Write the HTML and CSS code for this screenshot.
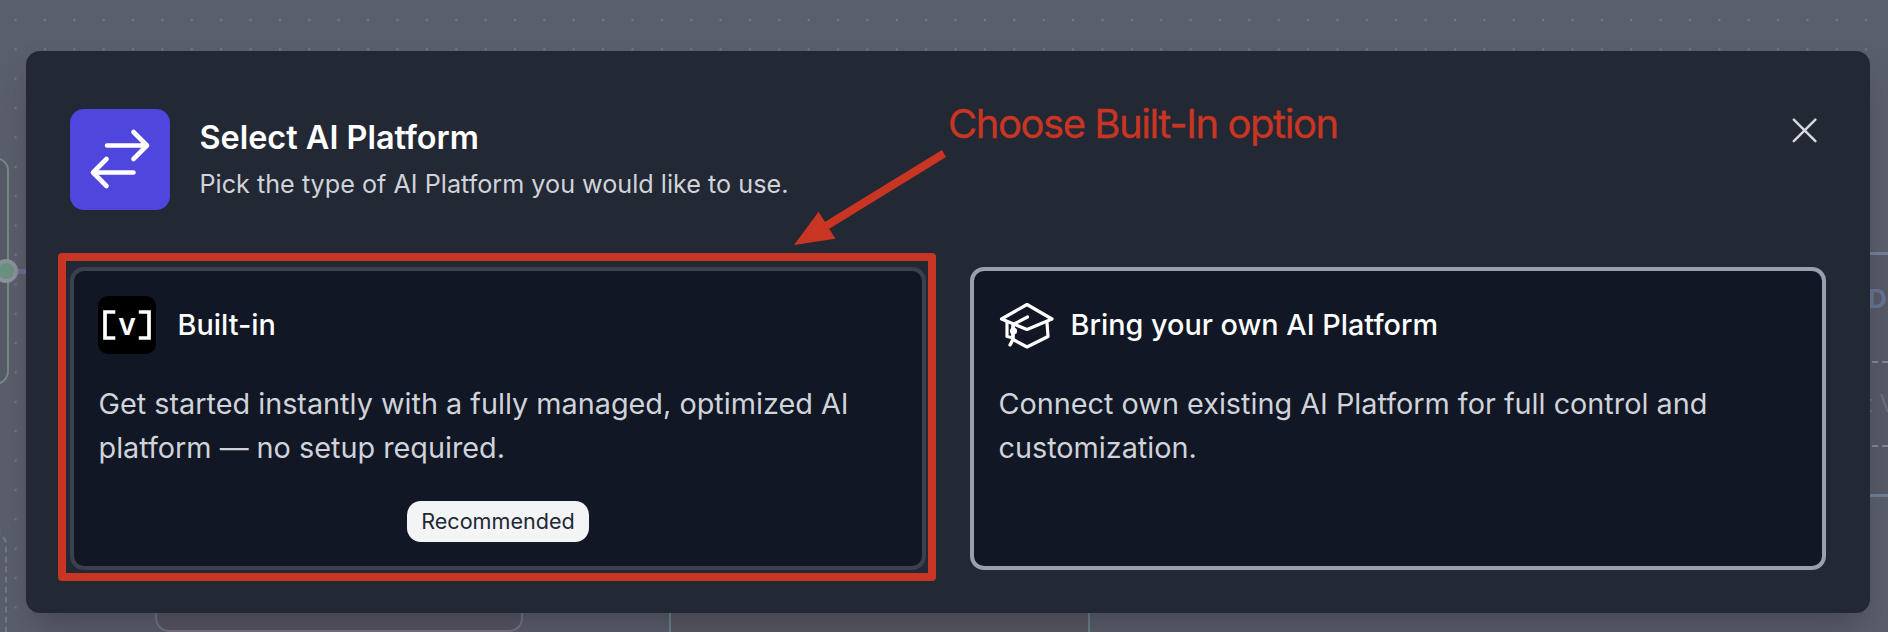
FILE: index.html
```html
<!DOCTYPE html>
<html lang="en">
<head>
<meta charset="utf-8">
<title>Select AI Platform</title>
<link rel="stylesheet" href="styles.css">
</head>
<body>
<div class="page">
  <div class="canvas" aria-hidden="true">
    <div class="node node-start"></div>
    <div class="edge"></div>
    <div class="handle"></div>
    <div class="node node-dashed"></div>
    <div class="node node-purple"></div>
    <div class="node node-teal"></div>
    <div class="node node-blue">
      <div class="node-title">D</div>
      <div class="node-slot">t V</div>
    </div>
  </div>

  <main class="modal">
    <header class="modal-header">
      <div class="modal-icon">
        <svg viewBox="0 0 100 100" fill="none" stroke="#fff" stroke-width="4.6" stroke-linecap="round" stroke-linejoin="round">
          <path d="M37 36.5H77M63.5 23L77 36.5L63.5 50M63.5 63.500H23M36.500 50L23 63.500L36.500 77"/>
        </svg>
      </div>
      <div class="modal-heading">
        <h1 class="modal-title">Select AI Platform</h1>
        <p class="modal-subtitle">Pick the type of AI Platform you would like to use.</p>
      </div>
      <button class="close" aria-label="Close">
        <svg viewBox="0 0 26 26" fill="none" stroke="#d5d8de" stroke-width="2.5" stroke-linecap="round">
          <path d="M1.800 2.600L23.400 24.200M23.400 2.600L1.800 24.200"/>
        </svg>
      </button>
    </header>

    <div class="options">
      <section class="option option-builtin">
        <div class="option-head">
          <div class="option-logo">
            <svg viewBox="0 0 58 58">
              <path fill="none" stroke="#fff" stroke-width="3.700" d="M17.300 16H7V42H17.300M40.800 16H51V42H40.800"/>
              <text class="logo-letter" x="29" y="38.500" text-anchor="middle">v</text>
            </svg>
          </div>
          <h2 class="option-title">Built-in</h2>
        </div>
        <p class="option-text">Get started instantly with a fully managed, optimized AI platform — no setup required.</p>
        <span class="badge">Recommended</span>
      </section>
      <section class="option option-own">
        <div class="option-head">
          <div class="option-cap">
            <svg viewBox="0 0 56 48" fill="none" stroke="#fff" stroke-width="3.200" stroke-linecap="round" stroke-linejoin="round">
              <path d="M2.500 17L28 2.500L53 17L28 27.500Z"/>
              <path d="M8 20V34.500L12.500 35.500M48 20.500L49 34.500L28 45L14 37.500V23"/>
              <path d="M28.500 15L16 21.500Q13.500 23 14 27V34Q14 39 11 43"/>
              <circle cx="14.500" cy="29" r="2" fill="#fff"/>
            </svg>
          </div>
          <h2 class="option-title">Bring your own AI Platform</h2>
        </div>
        <p class="option-text">Connect own existing AI Platform for full control and customization.</p>
      </section>
    </div>
  </main>

  <div class="callout-frame"></div>
  <div class="callout-text">Choose Built-In option</div>
  <svg class="callout-arrow" viewBox="0 0 160 100">
    <path d="M154 8.500L36 81" stroke="#c93523" stroke-width="8" fill="none"/>
    <path d="M4 100L28.600 66.700L45.400 93.700Z" fill="#c93523"/>
  </svg>
</div>
</body>
</html>
```
FILE: styles.css
```css
* {
  box-sizing: border-box;
}

body {
  margin: 0;
  font-family: Inter, "Liberation Sans", sans-serif;
}

.page {
  position: relative;
  width: 1888px;
  height: 632px;
  overflow: hidden;
  padding: 51px 18px 0 26px;
  background-color: #5a5f6c;
}

/* Dimmed flow editor behind the dialog */
.canvas {
  position: absolute;
  inset: 0;
  background-image: radial-gradient(circle at center, #747983 0.9px, transparent 1.6px);
  background-size: 29.38px 29.38px;
  background-position: 0.9px 5.3px;
}

.node {
  position: absolute;
  border: 2px solid;
  border-radius: 14px;
  background: #565b67;
}

.node-start {
  left: -200px;
  top: 157px;
  width: 209px;
  height: 228px;
  border-color: #748a86;
}

.edge {
  position: absolute;
  left: 16px;
  top: 269px;
  width: 20px;
  height: 5px;
  background: #6c6d99;
}

.handle {
  position: absolute;
  left: -6px;
  top: 259px;
  width: 24px;
  height: 24px;
  border: 4px solid #8f939c;
  border-radius: 50%;
  background: #6b9480;
}

.node-dashed {
  left: -200px;
  top: 531px;
  width: 207px;
  height: 200px;
  border: 2px dashed #727b80;
  background: none;
}

.node-purple {
  left: 155px;
  top: 480px;
  width: 368px;
  height: 152px;
  border-color: #7b768e;
  background: #565762;
}

.node-teal {
  left: 669px;
  top: 480px;
  width: 421px;
  height: 300px;
  border-color: #6c8a8a;
  background: #595a64;
}

.node-blue {
  left: 1700px;
  top: 252px;
  width: 400px;
  height: 245px;
  padding: 32px 0 0 165px;
  border-width: 3px;
  border-color: #72809c;
  background: #575b67;
}

.node-title {
  height: 74px;
  font-size: 26px;
  line-height: 24px;
  font-weight: 700;
  color: #667697;
}

.node-slot {
  height: 86px;
  margin-left: -165px;
  padding-left: 162px;
  border: dashed #858993;
  border-width: 2px 0;
  font-size: 24px;
  line-height: 82px;
  color: #6d717c;
}

/* Dialog */
.modal {
  position: relative;
  width: 1844px;
  height: 562px;
  padding: 58px 44px 43px;
  border-radius: 14px;
  background: #222834;
  box-shadow: 0 20px 36px -8px rgba(40, 36, 44, 0.4);
}

.modal-header {
  display: flex;
  align-items: flex-start;
  height: 158px;
}

.modal-icon {
  width: 100px;
  height: 101px;
  border-radius: 14px;
  background: #4f46dd;
}

.modal-icon svg {
  display: block;
  width: 100px;
  height: 100px;
}

.modal-heading {
  flex: 1;
  padding: 7px 0 0 29.500px;
}

.modal-title {
  margin: 0;
  font-size: 32.400px;
  line-height: 44px;
  font-weight: 600;
  color: #fff;
}

.modal-subtitle {
  margin: 6px 0 0;
  font-size: 25.200px;
  line-height: 36px;
  color: #d0d3da;
}

.close {
  width: 26px;
  height: 26px;
  margin: 8px 8px 0 0;
  padding: 0;
  border: 0;
  background: none;
}

.close svg {
  display: block;
}

.options {
  display: grid;
  grid-template-columns: 1fr 1fr;
  gap: 44px;
}

.option {
  display: flex;
  flex-direction: column;
  height: 303px;
  padding: 25px 24px;
  border: 4px solid #3a404f;
  border-radius: 14px;
  background: #111724;
}

.option-own {
  border-color: #9a9faf;
}

.option-head {
  display: flex;
  align-items: center;
  height: 58px;
}

.option-logo {
  width: 58px;
  height: 58px;
  margin-right: 21.500px;
  border-radius: 10px;
  background: #000;
}

.option-logo svg,
.option-cap svg {
  display: block;
}

.logo-letter {
  font-size: 30px;
  font-weight: 600;
  fill: #fff;
}

.option-cap {
  width: 56px;
  height: 48px;
  margin: 2px 15.500px 0 1px;
}

.option-title {
  margin: 0;
  font-size: 28.800px;
  line-height: 44px;
  font-weight: 500;
  color: #fff;
}

.option-text {
  margin: 28px 0 0 0.500px;
  font-size: 28.800px;
  line-height: 44px;
  color: #d0d3da;
}

.badge {
  align-self: center;
  height: 41px;
  margin-top: 31px;
  padding: 0 14.500px;
  border-radius: 14px;
  background: #f3f4f6;
  font-size: 21.600px;
  line-height: 41px;
  color: #222834;
}

/* Annotations drawn over the dialog */
.callout-frame {
  position: absolute;
  left: 58px;
  top: 253px;
  width: 878px;
  height: 328px;
  border: 8px solid #c93523;
  border-radius: 4px;
}

.callout-text {
  position: absolute;
  left: 948px;
  top: 100px;
  font-size: 40px;
  line-height: 48px;
  letter-spacing: -1.450px;
  white-space: nowrap;
  color: #c93523;
  -webkit-text-stroke: 0.3px #c93523;
}

.callout-arrow {
  position: absolute;
  left: 790px;
  top: 145px;
  width: 160px;
  height: 100px;
}
```
